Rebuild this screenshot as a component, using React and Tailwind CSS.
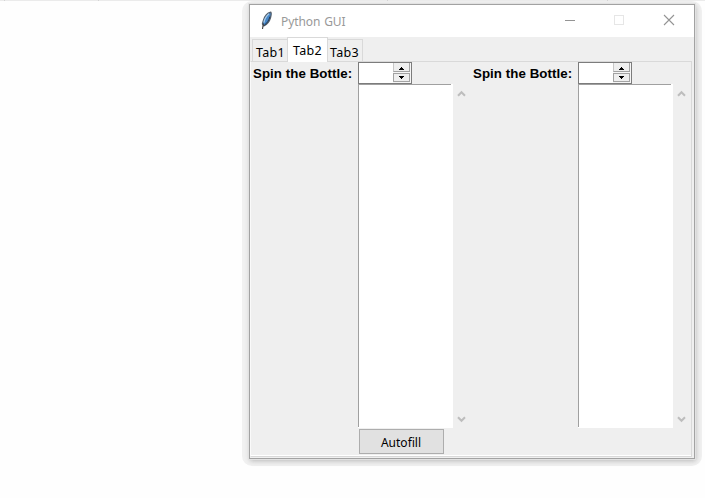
const UI = "font-['Noto_Sans','Open_Sans',sans-serif]";

function Feather() {
  return (
    <svg width="14" height="20" viewBox="0 0 14 20" className="ml-[10px] shrink-0">
      <path d="M10.8 1.2C7.4 2 4.4 5.6 3.2 9.8L2.4 13L3.8 15C7 13.4 9.6 10.4 10.5 6.9C11.1 4.5 11.8 2.4 10.8 1.2Z" fill="#4586c8" stroke="#555f6b" strokeWidth="1.2" />
      <path d="M9 2.8C6.4 5 4.6 8 3.9 11.6" fill="none" stroke="#a9cbe8" strokeWidth="1.2" />
      <path d="M9.9 5.6C9.1 9.2 7 12.2 4.2 14.4" fill="none" stroke="#26384c" strokeWidth="1" />
      <path d="M3.4 12.5L2.5 18" fill="none" stroke="#3a3a3a" strokeWidth="1.1" />
    </svg>
  );
}

function TitleBar() {
  return (
    <div className="flex h-[32px] items-center bg-white">
      <Feather />
      <span className={`${UI} ml-[7px] grow whitespace-nowrap pt-px text-[12px] leading-[32px] tracking-[-0.1px] text-[#999] [word-spacing:1px]`}>Python GUI</span>
      <svg width="130" height="32" viewBox="0 0 130 32" fill="none" stroke="#949494" shapeRendering="crispEdges" className="shrink-0">
        <path d="M1 15.5H11" />
        <path d="M50.5 10.5h9v9h-9z" stroke="#e6e6e6" />
        <path d="M100 10L110 20M110 10L100 20" shapeRendering="auto" stroke="#949494" strokeWidth="1.1" />
      </svg>
    </div>
  );
}

function SpinButton({ up }) {
  return (
    <div className={`flex h-[9px] w-[17px] justify-center border-x border-b border-[#a3a3a3] bg-[#efefef] ${up ? "border-l-[#c8c8c8] pt-[4px]" : "border-t pt-[2px]"}`}>
      <svg width="5" height="3" viewBox="0 0 5 3" shapeRendering="crispEdges">
        <path d={up ? "M2 0h1v1h1v1h1v1H0V2h1V1h1z" : "M0 0h5v1H4v1H3v1H2V2H1V1H0z"} fill="#000" />
      </svg>
    </div>
  );
}

function Spinbox() {
  return (
    <div className="flex h-[22px] w-[54px] justify-end border border-[#7c7c7c] bg-white">
      <div className="flex w-[18px] flex-col gap-px bg-[#f6f6f6]">
        <SpinButton up />
        <SpinButton />
      </div>
    </div>
  );
}

function Arrow({ down }) {
  return (
    <svg width="9" height="7" viewBox="0 0 9 7" fill="none" stroke="#bdbdbd" strokeWidth="2">
      <path d={down ? "M1 1.2L4.5 4.8L8 1.2" : "M1 5.8L4.5 2.2L8 5.8"} />
    </svg>
  );
}

function Panel({ button }) {
  return (
    <div className="grid grid-cols-[107px_95px_18px] grid-rows-[22px_344px_1fr]">
      <div className="whitespace-nowrap pl-[2px] pt-px font-['Liberation_Sans',Arial,sans-serif] text-[13.3px] font-bold leading-[22px] tracking-[0.06px] text-black">
        Spin the Bottle:
      </div>
      <div className="col-span-2"><Spinbox /></div>
      <div />
      <div className="bg-white">
        <div className="h-[343px] w-[93px] border-l border-t border-[#a0a0a0]" />
      </div>
      <div className="flex flex-col items-center justify-between pb-[5px] pr-[2px] pt-[6px]">
        <Arrow />
        <Arrow down />
      </div>
      <div />
      <div className="col-span-2 pl-px pt-px">
        {button && (
          <button className={`${UI} flex h-[25px] w-[85px] items-center justify-center border border-[#adadad] bg-[#e1e1e1] pr-px pt-[2px] text-[12px] text-black`}>
            Autofill
          </button>
        )}
      </div>
    </div>
  );
}

export default function App() {
  return (
    <div className="h-[498px] w-[705px] overflow-hidden bg-[#fefefe]">
      <div className="flex h-px gap-px bg-[#d4d4d4]">
        <div className="w-[4px] bg-[#ebebeb]" />
        <div className="w-[93px] bg-[#ebebeb]" />
        <div className="w-[288px] bg-[#ebebeb]" />
        <div className="w-[219px] bg-[#ebebeb]" />
        <div className="grow bg-[#ebebeb]" />
      </div>
      <div className="ml-[242px] h-[465px] w-[460px] rounded-[10px] bg-[#f1f1f1] pl-[7px] pt-[3px]">
        <div className="h-[455px] w-[446px] border border-[#a2a2a2] bg-[#efefef] shadow-[0_0_0_1px_#e2e2e2,1px_2px_5px_0px_#b8b8b8]">
          <TitleBar />
          <div className={`${UI} flex h-[24px] items-end pl-[2px] text-[12.5px] text-black`}>
            <div className="h-[22px] w-[35px] border-l border-t border-[#d9d9d9] pl-[3px] leading-[26px] tracking-[0.25px]">Tab1</div>
            <div className="relative -mb-px h-[25px] w-[41px] border-x border-t border-[#d9d9d9] bg-white pl-[5px] leading-[26px] tracking-[0.25px]">Tab2</div>
            <div className="h-[22px] w-[35px] border-r border-t border-[#d9d9d9] pl-[2px] leading-[26px] tracking-[0.25px]">Tab3</div>
          </div>
          <div className="h-[396px] w-[442px] border border-[#d9d9d9] border-l-[#fafafa]">
            <div className="flex h-full border-b border-white">
              <Panel button />
              <Panel />
            </div>
          </div>
        </div>
      </div>
    </div>
  );
}
